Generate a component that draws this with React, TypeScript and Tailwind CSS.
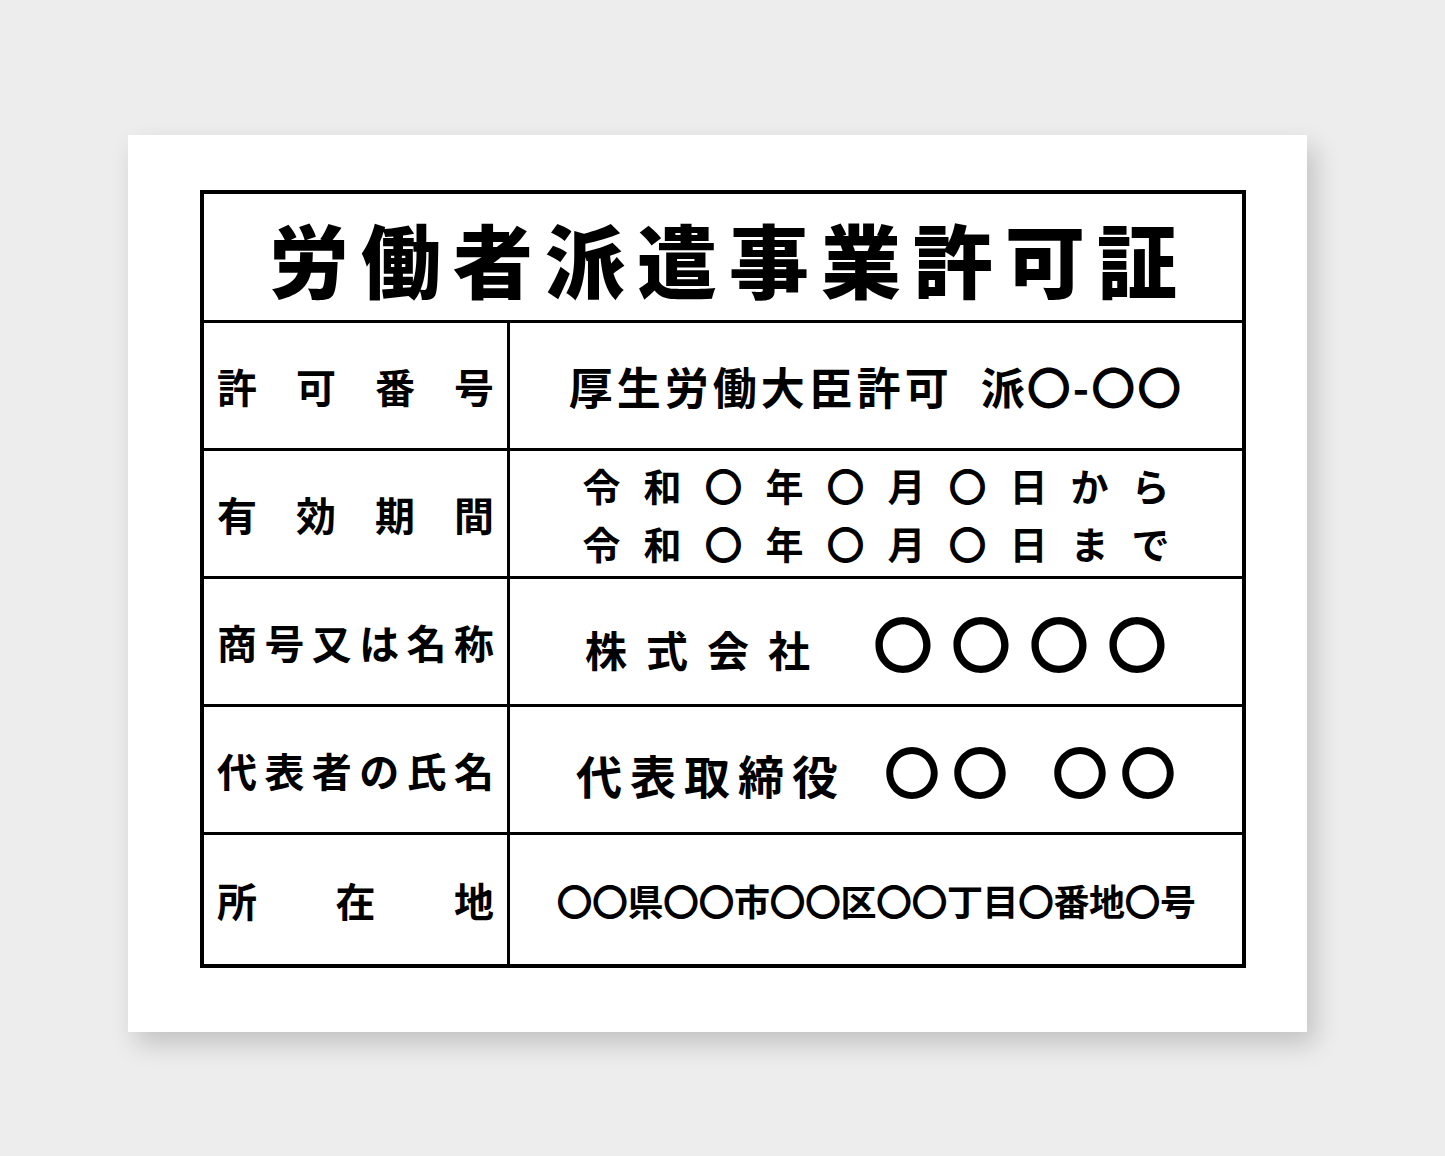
import React from 'react';

const font = { fontFamily: "'Noto Sans CJK JP', 'Noto Sans', sans-serif" };

const Label: React.FC<{ chars: string[] }> = ({ chars }) => (
  <div className="w-[306px] shrink-0 border-r-[3px] border-black flex items-center justify-between pl-[13px] pr-[13px] text-[40px] font-bold leading-none text-black">
    {chars.map((c, i) => (
      <span key={i}>{c}</span>
    ))}
  </div>
);

const Row: React.FC<{ chars: string[]; last?: boolean; children: React.ReactNode }> = ({ chars, last, children }) => (
  <div className={`flex ${last ? 'h-[129px]' : 'h-[128px] border-b-[3px] border-black'}`}>
    <Label chars={chars} />
    <div className="flex-1 flex items-center justify-center text-black font-bold leading-none">{children}</div>
  </div>
);

export default function App() {
  return (
    <div className="w-[1445px] h-[1156px] bg-[#ededed] overflow-hidden" style={font}>
      <div className="ml-[128px] mt-[135px] w-[1179px] h-[897px] bg-white shadow-[8px_12px_24px_rgba(0,0,0,0.18)] pl-[72px] pt-[55px]">
        <div className="w-[1046px] border-[4px] border-black">
          {/* Title */}
          <div className="h-[129px] border-b-[3px] border-black flex items-center justify-center">
            <h1 className="text-[80px] font-black leading-none tracking-[12px] mr-[-12px] text-black">労働者派遣事業許可証</h1>
          </div>

          <Row chars={['許', '可', '番', '号']}>
            <span className="text-[44px] tracking-[4px]">厚生労働大臣許可</span>
            <span className="text-[44px] ml-[28px] tracking-[2px]">派〇-〇〇</span>
          </Row>

          <Row chars={['有', '効', '期', '間']}>
            <div className="flex flex-col items-center gap-[20px] text-[38px] tracking-[23px] mr-[-23px]">
              <span>令和〇年〇月〇日から</span>
              <span>令和〇年〇月〇日まで</span>
            </div>
          </Row>

          <Row chars={['商', '号', '又', 'は', '名', '称']}>
            <span className="text-[42px] tracking-[19px] mt-[14px]">株式会社</span>
            <span className="text-[60px] tracking-[18px] mr-[-18px] ml-[44px]">〇〇〇〇</span>
          </Row>

          <Row chars={['代', '表', '者', 'の', '氏', '名']}>
            <span className="text-[46px] tracking-[8px] mt-[8px]">代表取締役</span>
            <span className="text-[56px] tracking-[12px] ml-[38px]">〇〇</span>
            <span className="text-[56px] tracking-[12px] mr-[-12px] ml-[32px]">〇〇</span>
          </Row>

          <Row chars={['所', '在', '地']} last>
            <span className="text-[36px] tracking-[-0.5px]">〇〇県〇〇市〇〇区〇〇丁目〇番地〇号</span>
          </Row>
        </div>
      </div>
    </div>
  );
}
